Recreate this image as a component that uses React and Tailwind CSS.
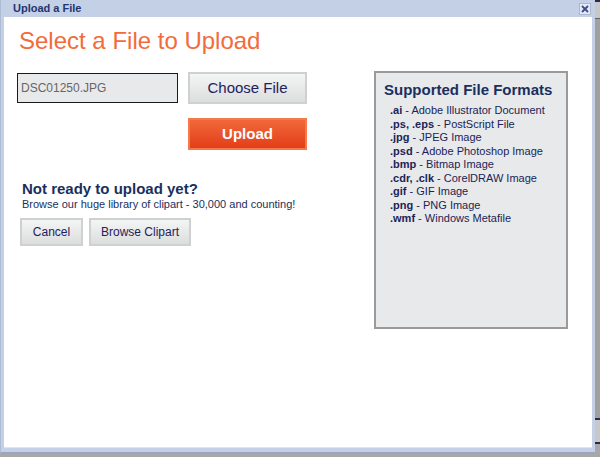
import React from 'react';

const formats = [
  ['.ai', 'Adobe Illustrator Document'],
  ['.ps, .eps', 'PostScript File'],
  ['.jpg', 'JPEG Image'],
  ['.psd', 'Adobe Photoshop Image'],
  ['.bmp', 'Bitmap Image'],
  ['.cdr, .clk', 'CorelDRAW Image'],
  ['.gif', 'GIF Image'],
  ['.png', 'PNG Image'],
  ['.wmf', 'Windows Metafile'],
];

export default function App() {
  return (
    <div className="w-[600px] h-[457px] bg-[#a8a8a8] flex font-['Liberation_Sans',Arial,sans-serif] overflow-hidden">
      <div className="w-[595px] h-[454px] bg-[#c3d0e5] flex flex-col border-l border-[#aebcd6] border-b-2 border-b-[#9aa6c0]">
        {/* title bar */}
        <div className="h-[17px] flex items-center justify-between pl-[12px] pr-[4px]">
          <span className="text-[11px] font-bold text-[#22356e] leading-none">Upload a File</span>
          <div className="w-[12px] h-[12px] bg-[#e4eaf5] border border-[#aab8d4] flex items-center justify-center">
            <svg width="8" height="8" viewBox="0 0 8 8">
              <path d="M1 1 L7 7 M7 1 L1 7" stroke="#3a4a8a" strokeWidth="1.8" />
            </svg>
          </div>
        </div>

        <div className="flex-1 mx-[3px] mb-[4px] bg-white border-b border-[#dfe5f0] pl-[13px] flex flex-col">
          <h1 className="text-[24px] text-[#f26b3a] leading-none mt-[12px] ml-[2px]">Select a File to Upload</h1>

          <div className="flex mt-[20px]">
            <div className="w-[357px] flex flex-col">
              <div className="flex gap-[10px]">
                <div className="w-[161px] h-[30px] border border-[#1a1a1a] bg-[#e8e9eb] flex items-center pl-[3px] text-[12px] text-[#666]">
                  DSC01250.JPG
                </div>
                <button className="w-[119px] h-[32px] -mt-[1px] border-2 border-[#cfd0d0] bg-gradient-to-b from-[#f4f5f5] to-[#dcdddd] text-[15px] text-[#1e2060]">
                  Choose File
                </button>
              </div>
              <div className="flex mt-[14px] ml-[171px]">
                <button className="w-[119px] h-[32px] border-2 border-[#f57a4a] bg-gradient-to-b from-[#f0673a] to-[#e33d17] text-[15px] font-bold text-white">
                  Upload
                </button>
              </div>

              <div className="mt-[30px] ml-[5px] text-[15px] font-bold text-[#1a2f5e] leading-[18px]">Not ready to upload yet?</div>
              <div className="ml-[5px] text-[11px] text-[#1a2f5e] leading-[13px]">Browse our huge library of clipart - 30,000 and counting!</div>

              <div className="flex gap-[6px] mt-[7px] ml-[3px]">
                <button className="w-[63px] h-[28px] border-2 border-[#cfd0d0] bg-gradient-to-b from-[#f4f5f5] to-[#dcdddd] text-[12px] text-[#1e2060]">
                  Cancel
                </button>
                <button className="w-[102px] h-[28px] border-2 border-[#cfd0d0] bg-gradient-to-b from-[#f4f5f5] to-[#dcdddd] text-[12px] text-[#1e2060]">
                  Browse Clipart
                </button>
              </div>
            </div>

            <div className="w-[194px] h-[258px] -mt-[2px] border-2 border-[#9a9a9a] bg-[#e8e9eb] pl-[8px] pt-[8px]">
              <div className="text-[15px] font-bold text-[#1a2f5e] leading-[18px]">Supported File Formats</div>
              <ul className="mt-[5px] ml-[6px] text-[11px] text-[#1a2455] leading-[13.5px]">
                {formats.map(([ext, desc]) => (
                  <li key={ext}>
                    <span className="font-bold">{ext}</span> - {desc}
                  </li>
                ))}
              </ul>
            </div>
          </div>
        </div>
      </div>

      <div className="flex-1 flex flex-col bg-[#a8a8a8]">
        <div className="h-[2px] bg-[#2a2a50]" />
        <div className="h-[16px] bg-[#c8c8c8]" />
        <div className="h-[1px] bg-[#606070]" />
        <div className="flex-1 bg-[#a0a0a0]" />
        <div className="h-[2px] bg-[#2a2a50]" />
        <div className="h-[22px] bg-[#c8c8c8]" />
        <div className="h-[2px] bg-[#2a2a50] mb-[13px]" />
      </div>
    </div>
  );
}
